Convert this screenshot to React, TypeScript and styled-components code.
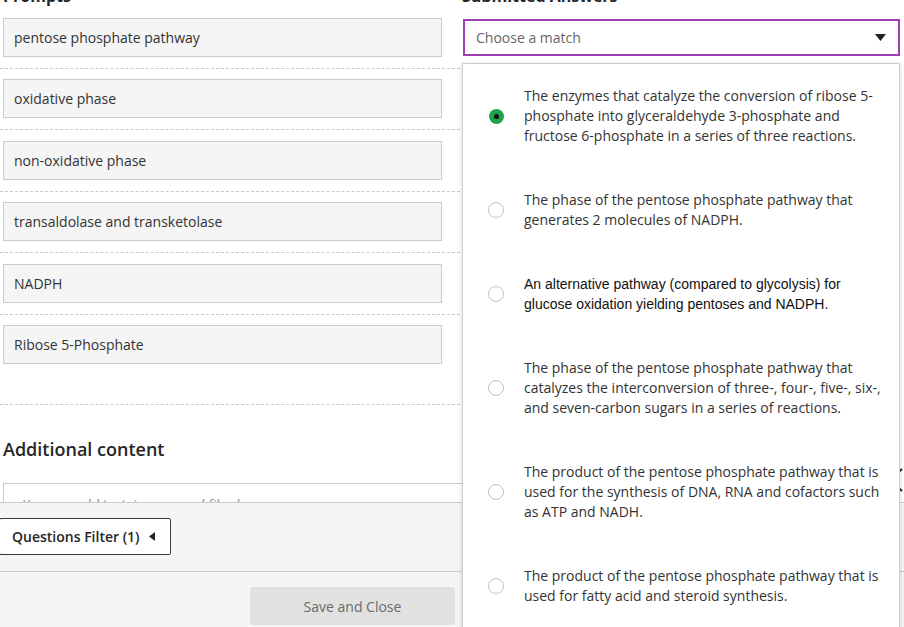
import React from "react";
import styled, { createGlobalStyle } from "styled-components";

const GlobalStyle = createGlobalStyle`
  html, body { margin: 0; padding: 0; background: #fff; }
  body { font-family: "Open Sans", "Noto Sans", sans-serif; color: #333; }
  * { box-sizing: border-box; }
`;

const Screen = styled.div`
  position: relative;
  width: 904px;
  height: 627px;
  overflow: hidden;
  display: grid;
  grid-template-rows: 502px 1fr;
  background: #fff;
`;

const Main = styled.main`
  min-height: 0;
  margin-top: -14px;
`;

const Columns = styled.div`
  display: grid;
  grid-template-columns: 460px 440px;
  column-gap: 2px;
`;

const Column = styled.section`
  position: relative;
  display: flex;
  flex-direction: column;
`;

const ColumnTitle = styled.h2<{ $indent: number }>`
  margin: 0 0 12px ${(p) => p.$indent}px;
  font-size: 16px;
  line-height: 20px;
  font-weight: 700;
  color: #262626;
`;

const PromptList = styled.div`
  display: flex;
  flex-direction: column;
`;

const PromptBox = styled.div`
  margin-left: 3px;
  width: 439px;
  height: 39px;
  display: flex;
  align-items: center;
  padding: 0 10px;
  background: #f5f5f5;
  border: 1px solid #cbcbcb;
  font-size: 14px;
  color: #333;
`;

const Divider = styled.hr<{ $top?: number }>`
  margin: ${(p) => (p.$top ?? 11)}px 0 10.4px;
  border: 0;
  border-top: 1px dashed #c9c9c9;
  height: 0;
  width: 460px;
`;

const Select = styled.div`
  margin: 1px 2px 0 1px;
  height: 37px;
  display: flex;
  align-items: center;
  justify-content: space-between;
  padding: 0 12px 0 11px;
  border: 2px solid #9c3db0;
  background: #fff;
  font-size: 14px;
  color: #666;
`;

const Panel = styled.div`
  position: absolute;
  z-index: 3;
  top: 77px;
  left: 0;
  right: 2px;
  background: #fff;
  border: 1px solid #d0d0d0;
  box-shadow: 0 1px 4px rgba(0, 0, 0, 0.18);
  display: flex;
  flex-direction: column;
`;

const Option = styled.div`
  display: flex;
  align-items: center;
  gap: 20px;
  padding: 22px 14px 22px 25px;
`;

const Radio = styled.span<{ $checked?: boolean }>`
  flex: none;
  width: ${(p) => (p.$checked ? "15px" : "16px")};
  height: ${(p) => (p.$checked ? "15px" : "16px")};
  margin-left: ${(p) => (p.$checked ? "1px" : "0")};
  border-radius: 50%;
  border: ${(p) => (p.$checked ? "none" : "1px solid #c4c4c4")};
  background: ${(p) => (p.$checked ? "#1fa34a" : "#fff")};
  display: flex;
  align-items: center;
  justify-content: center;
  &::after {
    content: "";
    display: ${(p) => (p.$checked ? "block" : "none")};
    width: 5px;
    height: 5px;
    border-radius: 50%;
    background: #111;
  }
`;

const OptionText = styled.div<{ $alt?: boolean }>`
  font-family: ${(p) =>
    p.$alt ? '"Liberation Sans", Arial, sans-serif' : '"Open Sans", sans-serif'};
  font-size: 14px;
  line-height: 20px;
  color: ${(p) => (p.$alt ? "#111" : "#333")};
`;

const AdditionalTitle = styled.h3`
  margin: 22px 0 22px 3px;
  font-size: 18px;
  line-height: 24px;
  font-weight: 600;
  color: #262626;
`;

const EditorBox = styled.div`
  margin-left: 3px;
  width: 897px;
  height: 120px;
  border: 1px solid #cbcbcb;
  padding: 11px 18px;
  font-size: 14px;
  line-height: 20px;
  font-style: italic;
  color: #888;
`;

const SideToggle = styled.svg`
  position: absolute;
  z-index: 2;
  right: -1px;
  top: 466px;
`;

const Footer = styled.footer`
  position: relative;
  z-index: 1;
  background: #f5f5f5;
  border-top: 1px solid #cbcbcb;
  display: flex;
  flex-direction: column;
`;

const FilterBar = styled.div`
  padding: 15px 0 16px;
  border-bottom: 1px solid #cbcbcb;
`;

const FilterButton = styled.button`
  margin-left: -1px;
  height: 37px;
  display: inline-flex;
  align-items: center;
  gap: 9px;
  padding: 0 15px 0 12px;
  background: #fff;
  border: 1px solid #3a3a3a;
  border-radius: 2px;
  font-family: "Open Sans", sans-serif;
  font-size: 14px;
  font-weight: 600;
  color: #262626;
`;

const ActionBar = styled.div`
  display: flex;
  justify-content: center;
  gap: 10px;
  padding: 15px 0 15px 16px;
`;

const ActionButton = styled.button`
  width: 205px;
  height: 38px;
  border: 0;
  border-radius: 2px;
  background: #e1e1e1;
  font-family: "Open Sans", sans-serif;
  font-size: 14px;
  color: #6b6b6b;
`;

const prompts = [
  "pentose phosphate pathway",
  "oxidative phase",
  "non-oxidative phase",
  "transaldolase and transketolase",
  "NADPH",
  "Ribose 5-Phosphate",
];

const options: { text: string; checked?: boolean; alt?: boolean }[] = [
  {
    text: "The enzymes that catalyze the conversion of ribose 5-phosphate into glyceraldehyde 3-phosphate and fructose 6-phosphate in a series of three reactions.",
    checked: true,
  },
  { text: "The phase of the pentose phosphate pathway that generates 2 molecules of NADPH." },
  {
    text: "An alternative pathway (compared to glycolysis) for glucose oxidation yielding pentoses and NADPH.",
    alt: true,
  },
  {
    text: "The phase of the pentose phosphate pathway that catalyzes the interconversion of three-, four-, five-, six-, and seven-carbon sugars in a series of reactions.",
  },
  {
    text: "The product of the pentose phosphate pathway that is used for the synthesis of DNA, RNA and cofactors such as ATP and NADH.",
  },
  { text: "The product of the pentose phosphate pathway that is used for fatty acid and steroid synthesis." },
];

export default function App() {
  return (
    <>
      <GlobalStyle />
      <Screen>
        <Main>
          <Columns>
            <Column>
              <ColumnTitle $indent={3}>Prompts</ColumnTitle>
              <PromptList>
                {prompts.map((p, i) => (
                  <React.Fragment key={p}>
                    <PromptBox>{p}</PromptBox>
                    {i < prompts.length - 1 && <Divider />}
                  </React.Fragment>
                ))}
                <Divider $top={40} />
              </PromptList>
            </Column>
            <Column>
              <ColumnTitle $indent={0}>Submitted Answers</ColumnTitle>
              <Select>
                <span>Choose a match</span>
                <svg width="11" height="7" viewBox="0 0 11 7">
                  <path d="M0 0 H11 L5.5 7 Z" fill="#222" />
                </svg>
              </Select>
              <Panel>
                {options.map((o) => (
                  <Option key={o.text}>
                    <Radio $checked={o.checked} />
                    <OptionText $alt={o.alt}>{o.text}</OptionText>
                  </Option>
                ))}
              </Panel>
            </Column>
          </Columns>
          <AdditionalTitle>Additional content</AdditionalTitle>
          <EditorBox>You can add text, images and files here</EditorBox>
        </Main>
        <SideToggle width="20" height="28" viewBox="0 0 20 28">
          <path d="M17 3 L5 14 L17 25" fill="none" stroke="#222" strokeWidth="2" />
        </SideToggle>
        <Footer>
          <FilterBar>
            <FilterButton>
              Questions Filter (1)
              <svg width="6" height="9" viewBox="0 0 6 9">
                <path d="M6 0 V9 L0 4.5 Z" fill="#262626" />
              </svg>
            </FilterButton>
          </FilterBar>
          <ActionBar>
            <ActionButton disabled>Save and Close</ActionButton>
            <ActionButton disabled>Submit</ActionButton>
          </ActionBar>
        </Footer>
      </Screen>
    </>
  );
}
